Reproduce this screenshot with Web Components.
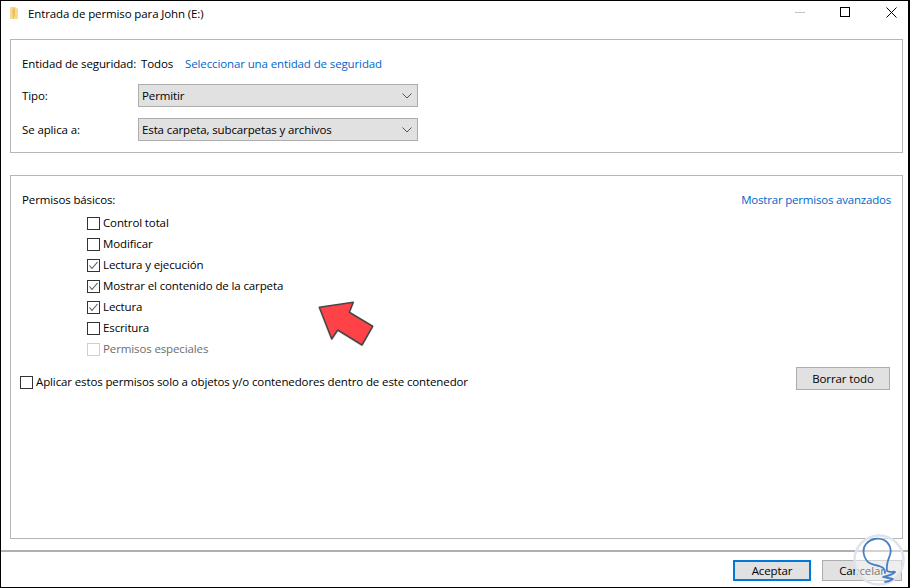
<!DOCTYPE html>
<html lang="es">
<head>
<meta charset="utf-8">
<title>Entrada de permiso</title>
<style>
  html, body { margin: 0; padding: 0; background: #fff; }
  body { font: 11.5px "Open Sans", "Noto Sans", sans-serif; letter-spacing: -0.12px; color: #000; white-space: nowrap; }
</style>
</head>
<body>
<permission-window>
  <win-titlebar slot="title">Entrada de permiso para John (E:)</win-titlebar>

  <group-panel style="height:114px;padding:10px 11px 0;">
    <div style="display:flex;align-items:center;height:26px;">
      <span style="width:119px;">Entidad de seguridad:</span>
      <span style="width:44px;">Todos</span>
      <link-text>Seleccionar una entidad de seguridad</link-text>
    </div>
    <form-row label="Tipo:" style="margin-top:8px;"><combo-box>Permitir</combo-box></form-row>
    <form-row label="Se aplica a:" style="margin-top:11px;"><combo-box>Esta carpeta, subcarpetas y archivos</combo-box></form-row>
  </group-panel>

  <group-panel style="height:364px;margin-top:22px;padding:14px 11px 0;">
    <div style="display:flex;justify-content:space-between;height:18px;align-items:center;">
      <span>Permisos básicos:</span>
      <link-text style="letter-spacing:-0.2px;">Mostrar permisos avanzados</link-text>
    </div>
    <div style="display:flex;flex-direction:column;gap:8px;margin:9px 0 0 65px;">
      <check-item>Control total</check-item>
      <check-item>Modificar</check-item>
      <check-item checked>Lectura y ejecución</check-item>
      <check-item checked>Mostrar el contenido de la carpeta</check-item>
      <check-item checked>Lectura</check-item>
      <check-item>Escritura</check-item>
      <check-item disabled>Permisos especiales</check-item>
    </div>
    <div style="display:flex;justify-content:space-between;align-items:flex-start;margin:11px 0 0 -2px;padding-right:1px;">
      <check-item style="margin-top:9px;">Aplicar estos permisos solo a objetos y/o contenedores dentro de este contenedor</check-item>
      <push-button style="width:94px;">Borrar todo</push-button>
    </div>
  </group-panel>

  <push-button slot="actions" primary style="width:78px;">Aceptar</push-button>
  <push-button slot="actions" style="width:80px;">Cancelar</push-button>
</permission-window>

<script>
// Outer dialog: titlebar, content area, divider and the button row.
customElements.define('permission-window', class extends HTMLElement {
  constructor () {
    super()
    this.attachShadow({ mode: 'open' }).innerHTML = `
      <style>
        :host {
          display: flex; flex-direction: column; box-sizing: border-box; position: relative;
          width: 910px; height: 588px; overflow: hidden; background: #fff;
          border: solid #000; border-width: 1px 2px 1px 1px;
        }
        main { padding: 0 5px 0 9px; height: 511px; box-sizing: border-box; flex: none; }
        footer {
          flex: 1; border-top: 2px solid #b0b0b0; display: flex; justify-content: flex-end;
          gap: 11px; padding: 8px 6px 0 0;
        }
        .arrow { position: absolute; left: 0; top: 0; }
        .mark { position: absolute; left: 851px; top: 532px; }
      </style>
      <slot name="title"></slot>
      <main><slot></slot></main>
      <footer><slot name="actions"></slot></footer>
      <svg class="arrow" width="908" height="586" viewBox="1 1 908 586">
        <defs><filter id="s" x="-20%" y="-20%" width="140%" height="140%"><feGaussianBlur stdDeviation="1.2"/></filter></defs>
        <polygon points="319.3,307.3 353.3,302.3 349.3,312.3 372.7,326.3 362,345 337.7,330 331.7,339" fill="#999" opacity=".35" filter="url(#s)" transform="translate(0,1)"/>
        <polygon points="319.3,307.3 353.3,302.3 349.3,312.3 372.7,326.3 362,345 337.7,330 331.7,339" fill="#ff4248" stroke="#474747" stroke-width="1.6" stroke-linejoin="round"/>
      </svg>
      <svg class="mark" width="54" height="54" viewBox="0 0 54 54">
        <circle cx="27" cy="27" r="24.5" fill="#fff" fill-opacity=".45" stroke="#dfe3ee" stroke-width="2.5"/>
        <path d="M33 40C33 35 30 34 27 33C22 32 17 31 15 28C11 23 10 16 14 11C18 6 26 4 32 7C38 10 40 17 38 22C36 27 34 31 35 38C38 40 42 38 43 39C40 42 35 43 31 44C34 45 38 45 41 46C38 48 35 49 33 49" fill="none" stroke="#4a7fc4" stroke-width="1.8" stroke-linejoin="round" stroke-linecap="round"/>
      </svg>`
  }
})

// Titlebar with folder icon and window controls.
customElements.define('win-titlebar', class extends HTMLElement {
  constructor () {
    super()
    this.attachShadow({ mode: 'open' }).innerHTML = `
      <style>
        :host { display: flex; align-items: center; height: 29px; padding-left: 9px; margin-bottom: 9px; }
        .label { margin-left: 9px; flex: 1; position: relative; top: -2px; }
        .ctl { display: flex; align-self: flex-start; }
        .ctl svg { display: block; }
      </style>
      <svg width="9" height="13" viewBox="0 0 9 13" style="margin-top:-4px">
        <path d="M0 0H5L8 2V12H0Z" fill="#f8dc8c"/>
        <path d="M2 3L5 0V9L3 12Z" fill="#e9c06a"/>
      </svg>
      <span class="label"><slot></slot></span>
      <div class="ctl">
        <svg width="46" height="24" viewBox="0 0 46 24"><path d="M25 11.5H35" stroke="#c4c4c4"/></svg>
        <svg width="46" height="24" viewBox="0 0 46 24"><rect x="24.5" y="6.5" width="9" height="9" fill="none" stroke="#000"/></svg>
        <svg width="46" height="24" viewBox="0 0 46 24"><path d="M24.5 6.5L34.5 16.5M34.5 6.5L24.5 16.5" fill="none" stroke="#000"/></svg>
      </div>`
  }
})

customElements.define('group-panel', class extends HTMLElement {
  constructor () {
    super()
    this.attachShadow({ mode: 'open' }).innerHTML = `
      <style>:host { display: block; border: 1px solid #b5b5b5; box-sizing: border-box; }</style>
      <slot></slot>`
  }
})

customElements.define('link-text', class extends HTMLElement {
  constructor () {
    super()
    this.attachShadow({ mode: 'open' }).innerHTML = `
      <style>:host { display: inline-block; color: #0066cc; }</style>
      <slot></slot>`
  }
})

customElements.define('form-row', class extends HTMLElement {
  constructor () {
    super()
    this.attachShadow({ mode: 'open' }).innerHTML = `
      <style>
        :host { display: flex; align-items: center; }
        span { width: 116px; flex: none; }
      </style>
      <span></span><slot></slot>`
    this.shadowRoot.querySelector('span').textContent = this.getAttribute('label')
  }
})

customElements.define('combo-box', class extends HTMLElement {
  constructor () {
    super()
    this.attachShadow({ mode: 'open' }).innerHTML = `
      <style>
        :host {
          display: flex; align-items: center; justify-content: space-between; box-sizing: border-box;
          width: 280px; height: 23px; padding: 0 5px 0 3px; background: #e1e1e1; border: 1px solid #adadad;
        }
        svg { display: block; }
      </style>
      <span><slot></slot></span>
      <svg width="10" height="6" viewBox="0 0 10 6"><path d="M.5 .5L5 5L9.5 .5" fill="none" stroke="#555"/></svg>`
  }
})

customElements.define('check-item', class extends HTMLElement {
  constructor () {
    super()
    const on = this.hasAttribute('checked')
    this.attachShadow({ mode: 'open' }).innerHTML = `
      <style>
        :host { display: flex; align-items: flex-start; gap: 3px; height: 13px; }
        :host([disabled]) { color: #6d6d6d; }
        svg { display: block; flex: none; }
        span { line-height: 11px; }
      </style>
      <svg width="13" height="13" viewBox="0 0 13 13">
        <rect x=".5" y=".5" width="12" height="12" fill="#fff" stroke="${this.hasAttribute('disabled') ? '#cfcfcf' : '#333'}"/>
        ${on ? '<path d="M2.5 6.5L5 9.5L10.5 3" fill="none" stroke="#555" stroke-width="1.1"/>' : ''}
      </svg>
      <span><slot></slot></span>`
  }
})

customElements.define('push-button', class extends HTMLElement {
  constructor () {
    super()
    this.attachShadow({ mode: 'open' }).innerHTML = `
      <style>
        :host {
          display: flex; align-items: center; justify-content: center; box-sizing: border-box; flex: none;
          height: 23px; background: #e1e1e1; border: 1px solid #adadad;
        }
        :host([slot="actions"]) { height: 21px; }
        :host([primary]) { border: 2px solid #0078d7; }
      </style>
      <slot></slot>`
  }
})
</script>
</body>
</html>
